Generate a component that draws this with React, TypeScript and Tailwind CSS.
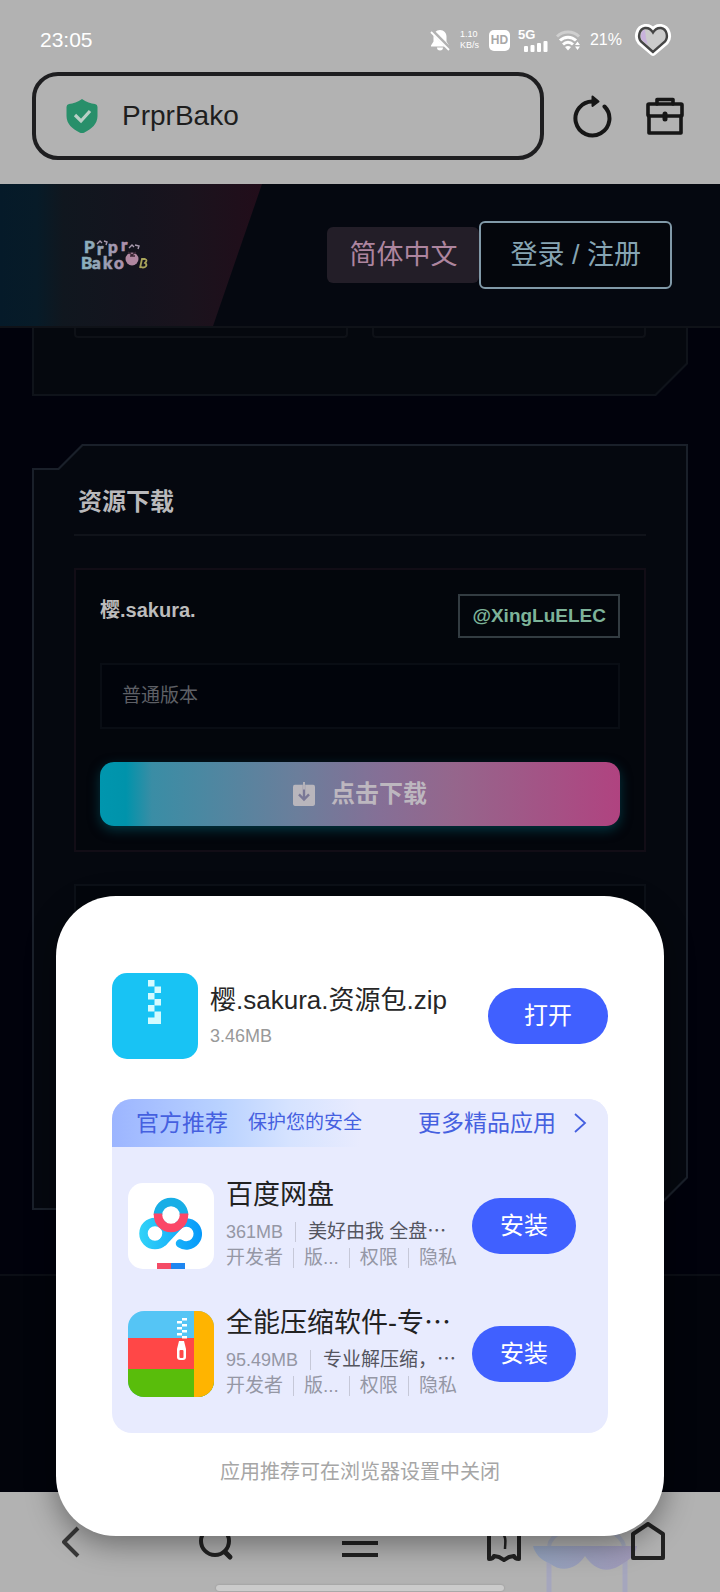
import type { ReactNode } from "react";

function BellOff() {
  return (
    <svg width="20" height="22" viewBox="0 0 20 22" aria-hidden="true">
      <path d="M10 1c4 0 6.500 3 6.500 6.500v5L19 16.500v1H1v-1l2.500-4v-5C3.500 4 6 1 10 1Z" fill="#fff" />
      <path d="M7 18.500h6a3 3 0 0 1-6 0Z" fill="#fff" />
      <path d="M1.500 1.500l18 18" stroke="#b2b2b2" strokeWidth="4" />
      <path d="M1 3l18 18" stroke="#fff" strokeWidth="1.800" />
    </svg>
  );
}

function Signal() {
  return (
    <svg width="24" height="11" viewBox="0 0 24 11" aria-hidden="true" fill="#fff">
      <rect x="0" y="5" width="4" height="6" rx="1" />
      <rect x="6.500" y="4" width="4" height="7" rx="1" />
      <rect x="13" y="2" width="4" height="9" rx="1" />
      <rect x="19.500" y="0" width="4" height="11" rx="1" />
    </svg>
  );
}

function Wifi() {
  return (
    <svg width="26" height="21" viewBox="0 0 26 21" aria-hidden="true" fill="none">
      <path d="M1 6.500C7 .5 17 .5 23 6.500" stroke="#cfcfcf" strokeWidth="3" />
      <path d="M4 10.500c4.500-4.500 11.500-4.500 16 0" stroke="#fff" strokeWidth="3" />
      <path d="M7 14.500c3-3 7-3 10 0" stroke="#fff" strokeWidth="2.800" />
      <path d="M9 17c2-1.400 4-1.400 6 0L12 20.500Z" fill="#fff" />
      <path d="M19 15l2.500-3.500L24 15ZM19 16.500l2.500 3.500 2.500-3.500Z" fill="#fff" />
    </svg>
  );
}

function Heart() {
  return (
    <svg width="38" height="34" viewBox="0 0 38 34" aria-hidden="true">
      <path d="M19 30L6 19C2 14 4 5 11 4c4-.5 6.500 1.500 8 4 1.500-2.500 4-4.500 8-4 7 1 9 10 5 15Z" fill="#cbcbcb" stroke="#fff" strokeWidth="6" strokeLinejoin="round" />
      <path d="M19 29L7 18.500C3.500 14 5 6 11 5c4-.4 6.500 2 8 4.500C20.500 7 23 4.600 27 5c6 1 7.500 9 4 13.500Z" fill="#cbcbcb" stroke="#454545" strokeWidth="2.400" />
      <path d="M8 17c-2-3-1-9 2.500-10.500C12 9 11 14 14 22Z" fill="#c9b3dc" />
    </svg>
  );
}

function Shield() {
  return (
    <svg width="32" height="36" viewBox="0 0 32 36" className="shrink-0" aria-hidden="true">
      <path d="M16 1c4 3 9 4.500 13 5q2.500.3 2.500 3v9c0 8-6 13-13 16.500q-2.500 1-5 0C6.500 31 .5 26 .5 18V9q0-2.700 2.500-3c4-.5 9-2 13-5Z" fill="#288f6a" />
      <path d="M9 17l6 6 9-10" fill="none" stroke="#b9cfc6" strokeWidth="3.200" />
    </svg>
  );
}

function Reload() {
  return (
    <svg width="40" height="44" viewBox="0 0 40 44" aria-hidden="true">
      <path d="M32.500 12.500A17 17 0 1 1 21 7.500" fill="none" stroke="#161616" strokeWidth="4" strokeLinecap="round" />
      <path d="M20.500 2.500l6 5-6 4.500Z" fill="#161616" stroke="#161616" strokeWidth="2" strokeLinejoin="round" />
    </svg>
  );
}

function Briefcase() {
  return (
    <svg width="38" height="40" viewBox="0 0 38 40" aria-hidden="true" fill="none" stroke="#161616" strokeWidth="3.600" strokeLinejoin="round" strokeLinecap="round">
      <path d="M11 8V3.500h16V8" />
      <rect x="2" y="8" width="34" height="12" rx="1" />
      <path d="M3 20v17h32V20" />
      <path d="M19 18v5" strokeWidth="5" />
    </svg>
  );
}

function Logo() {
  return (
    <svg width="70" height="34" viewBox="0 0 70 34" role="img" aria-label="PrprBako" className="overflow-visible">
      <defs>
        <linearGradient id="logo" gradientUnits="userSpaceOnUse" x1="0" y1="0" x2="46" y2="0">
          <stop offset="0" stopColor="#84b3be" />
          <stop offset="1" stopColor="#b08fac" />
        </linearGradient>
      </defs>
      <g fontFamily="Lato, 'Liberation Sans', sans-serif" fontWeight="900" fill="url(#logo)" stroke="url(#logo)" strokeWidth=".6">
        <text x="4 17 28 41" y="15 17 15 13" fontSize="17">Prpr</text>
        <text x="1 12 23 34" y="31" fontSize="17">Bako</text>
      </g>
      <path d="M17 6l3-3 2 2M24 3l3 1-1 3M49 10l3-3 2 2M55 7l4 1-1 3" fill="none" stroke="#a89aae" strokeWidth="1.400" />
      <circle cx="52" cy="21" r="6.500" fill="#b087a0" />
      <path d="M48 14l4 3 4-3M50 18h5" fill="none" stroke="#3b2735" strokeWidth="1.300" />
      <path d="M60 30l2-9h3q3 1 0 4 3 2 0 4-2 1-4 0" fill="none" stroke="#a8a45a" strokeWidth="1.800" />
    </svg>
  );
}

function DownloadBox() {
  return (
    <svg width="22" height="24" viewBox="0 0 24 26" aria-hidden="true">
      <rect x="0" y="3" width="24" height="23" rx="2" fill="#b9b6bc" />
      <path d="M12 3v16M6.500 13.500L12 19l5.500-5.500" fill="none" stroke="#7a7896" strokeWidth="2.600" />
      <path d="M12 0v8" stroke="#b9b6bc" strokeWidth="2" />
    </svg>
  );
}

function ZipIcon() {
  return (
    <svg className="size-[86px] shrink-0" viewBox="0 0 86 86" aria-hidden="true">
      <rect width="86" height="86" rx="15" fill="#18c3f4" />
      <g fill="#d3fbff">
        <rect x="36" y="7" width="6.500" height="6.500" />
        <rect x="42.500" y="13.500" width="6.500" height="6.500" />
        <rect x="36" y="20" width="6.500" height="6.500" />
        <rect x="42.500" y="26" width="6.500" height="6.500" />
        <rect x="36" y="32" width="6.500" height="6.500" />
        <path d="M42.500 38.500H49V51H36v-6.500h6.500Z" />
      </g>
    </svg>
  );
}

function CloudDiskIcon() {
  return (
    <svg className="size-[86px] shrink-0" viewBox="0 0 86 86" aria-hidden="true">
      <defs>
        <linearGradient id="disk-blue" gradientUnits="userSpaceOnUse" x1="11" y1="50" x2="75" y2="50">
          <stop offset="0" stopColor="#31d3f8" />
          <stop offset="1" stopColor="#0698fa" />
        </linearGradient>
      </defs>
      <rect width="86" height="86" rx="15" fill="#fff" />
      <g fill="none" strokeWidth="8.500">
        <circle cx="27" cy="50.500" r="11.500" stroke="url(#disk-blue)" />
        <path d="M52 60.500A11.500 11.500 0 1 0 51 42L35 59" stroke="url(#disk-blue)" strokeLinecap="round" />
        <path d="M30 32a13 13 0 0 1 26 0" stroke="#18aee6" />
        <path d="M30 30.500v1.500a13 13 0 0 0 26 0v-1.500" stroke="#fb4768" />
      </g>
      <path d="M29 80h14v6H29Z" fill="#f44b66" />
      <path d="M43 80h14v6H43Z" fill="#1e86f0" />
    </svg>
  );
}

function ArchiverIcon() {
  return (
    <svg className="size-[86px] shrink-0 rounded-2xl" viewBox="0 0 86 86" aria-hidden="true">
      <rect width="86" height="86" fill="#55c5f5" />
      <rect y="27" width="86" height="31" fill="#ff4747" />
      <rect y="58" width="86" height="28" fill="#59bd0b" />
      <rect x="66" width="20" height="86" fill="#ffb400" />
      <g fill="#fff">
        <path d="M54 7h5v2.500h-5ZM49 10h5v2.500h-5ZM54 13h5v2.500h-5ZM49 16h5v2.500h-5ZM54 19h5v2.500h-5ZM49 22h5v2.500h-5ZM54 25h5v2.500h-5Z" />
        <path d="M51 30h5l2 8v8q0 3-3 3h-3q-3 0-3-3v-8Z" />
      </g>
      <rect x="51.500" y="39" width="4" height="8" rx="1" fill="#ff4747" />
    </svg>
  );
}

function NavButton({ label, children }: { label: string; children: ReactNode }) {
  return (
    <button type="button" aria-label={label} className="flex h-10 items-center justify-center">
      {children}
    </button>
  );
}

const navStroke = { fill: "none", stroke: "#222", strokeWidth: 4, strokeLinejoin: "round" as const };

function BottomNav() {
  return (
    <nav className="relative flex h-[100px] flex-col items-center justify-between bg-[#b2b2b2] pt-[30px]">
      <svg className="absolute right-[82px] bottom-0" width="106" height="64" viewBox="0 0 106 64" aria-hidden="true">
        <defs>
          <linearGradient id="bag" x1="0" y1="0" x2="1" y2="0">
            <stop offset="0" stopColor="#94a3be" />
            <stop offset="1" stopColor="#a099b8" />
          </linearGradient>
        </defs>
        <path d="M17 32v34M93 32v34" stroke="#a5a6bd" strokeWidth="5" />
        <path d="M17 18C22-8 86-8 92 18" fill="none" stroke="#a0a6b8" strokeWidth="4" />
        <path d="M1 18h104c-2 10-8 14-18 20-14 8-26 2-34-10-8 12-22 18-36 7C9 32 3 26 1 18Z" fill="url(#bag)" />
      </svg>
      <div className="relative grid w-full grid-cols-5">
        <NavButton label="后退">
          <svg width="20" height="34" viewBox="0 0 20 34" aria-hidden="true">
            <path d="M16 3L2 17l14 14" {...navStroke} stroke="#383838" />
          </svg>
        </NavButton>
        <NavButton label="搜索">
          <svg width="36" height="38" viewBox="0 0 36 38" aria-hidden="true">
            <circle cx="17" cy="18" r="14" {...navStroke} />
            <path d="M27 29l5 5" {...navStroke} strokeWidth={5} strokeLinecap="round" />
          </svg>
        </NavButton>
        <NavButton label="菜单">
          <svg width="36" height="38" viewBox="0 0 36 38" aria-hidden="true">
            <path d="M0 7h36M0 20h36M0 32h36" {...navStroke} />
          </svg>
        </NavButton>
        <NavButton label="标签页">
          <svg width="36" height="40" viewBox="0 0 36 40" aria-hidden="true">
            <path d="M3 4h30v33q-4 0-5-3l-5 1-5 3-5-3-5-1q-1 3-5 3Z" {...navStroke} />
            <path d="M17 12c4 4 2 9 2 15" {...navStroke} strokeWidth={2.5} />
          </svg>
        </NavButton>
        <NavButton label="主页">
          <svg width="36" height="40" viewBox="0 0 36 40" aria-hidden="true">
            <path d="M18 2L3 12v24h30V12Z" {...navStroke} />
          </svg>
        </NavButton>
      </div>
      <div className="mb-px h-[6px] w-2/5 rounded-full bg-[#cbcbcb] shadow-[0_0_2px_#8d8d8d]" />
    </nav>
  );
}

function BrowserBar() {
  return (
    <div className="bg-[#b2b2b2] pb-6">
      <div className="flex h-[72px] items-center justify-between pt-2 pr-12 pl-10 text-white">
        <time className="text-[21px]">23:05</time>
        <div className="flex items-center gap-2">
          <BellOff />
          <div className="mx-[2px] flex flex-col text-[9px] leading-[11px]">
            <span>1.10</span>
            <span>KB/s</span>
          </div>
          <span className="flex size-[21px] items-center justify-center rounded-[5px] bg-white text-[12px] font-bold text-[#a8a8a8]">HD</span>
          <div className="flex flex-col">
            <span className="text-[13px] leading-[12px] font-bold">5G</span>
            <span className="pl-[6px]"><Signal /></span>
          </div>
          <Wifi />
          <span className="text-[16px]">21%</span>
          <span className="ml-1"><Heart /></span>
        </div>
      </div>
      <div className="flex items-center pr-9 pl-8">
        <label className="flex h-[88px] flex-1 items-center gap-6 rounded-[26px] border-4 border-[#1e1e20] px-[30px]">
          <Shield />
          <input aria-label="网址" defaultValue="PrprBako" className="w-full min-w-0 bg-transparent text-[28px] text-[#1e1e1e] outline-none" />
        </label>
        <button type="button" aria-label="刷新" className="ml-7"><Reload /></button>
        <button type="button" aria-label="工具箱" className="ml-[34px]"><Briefcase /></button>
      </div>
    </div>
  );
}

function SiteHeader() {
  return (
    <header className="flex h-36 items-center justify-between border-b-2 border-[#0f1218] bg-[#050810] pr-12">
      <div className="flex h-full w-[262px] items-center bg-[linear-gradient(90deg,#051a29_0%,#071b28_14%,#10171f_24%,#14141e_50%,#1a131d_72%,#220d1a_100%)] pl-20 [clip-path:polygon(0_0,100%_0,213px_100%,0_100%)]">
        <Logo />
      </div>
      <div className="flex items-center text-[27px]">
        <button type="button" className="h-14 rounded-md bg-[#231e28] px-[22px] text-[#ad859f]">简体中文</button>
        <button type="button" className="h-[68px] rounded-md border-2 border-[#8199a8] bg-[#04060c] px-[29px] text-[#86a4b3]">登录 / 注册</button>
      </div>
    </header>
  );
}

function DownloadCard() {
  return (
    <article className="border-2 border-[#120d16] bg-[#03060c] p-6">
      <div className="flex items-start justify-between">
        <h3 className="text-[20px] leading-8 font-bold text-[#bcbcbc]">樱.sakura.</h3>
        <span className="flex h-11 items-center border-2 border-[#333c42] px-3 text-[19px] font-bold text-[#7db399]">@XingLuELEC</span>
      </div>
      <p className="mt-[25px] flex h-[66px] items-center border-2 border-[#090d14] bg-[#01040b] px-5 text-[19px] text-[#5e6066]">普通版本</p>
      <button
        type="button"
        className="mt-[33px] flex h-16 w-full items-center justify-center gap-4 rounded-[14px] bg-[linear-gradient(90deg,#0096ae_0%,#0093ab_5%,#3a8da5_10%,#6b7e9b_38%,#856f96_54%,#95668c_68%,#b04380_100%)] text-[24px] font-bold text-[#bdb7bf] shadow-[0_4px_12px_rgba(0,100,115,0.5)]"
      >
        <DownloadBox />
        点击下载
      </button>
    </article>
  );
}

function SitePage() {
  return (
    <main className="flex-1 bg-[#01020c]">
      <div className="mx-8 bg-[#0f131a] px-[2px] pb-[2px] [clip-path:polygon(0_0,100%_0,100%_calc(100%-32px),calc(100%-32px)_100%,0_100%)]">
        <div className="flex gap-6 bg-[#05080e] px-10 pb-14 [clip-path:polygon(0_0,100%_0,100%_calc(100%-31px),calc(100%-31px)_100%,0_100%)]">
          <div className="h-[10px] flex-1 rounded-b border-2 border-t-0 border-[#0e1117]" />
          <div className="h-[10px] flex-1 rounded-b border-2 border-t-0 border-[#0e1117]" />
        </div>
      </div>
      <section className="mx-8 mt-12 bg-[#1a202a] p-[2px] [clip-path:polygon(0_24px,26px_24px,50px_0,100%_0,100%_calc(100%-32px),calc(100%-32px)_100%,0_100%)]">
        <div className="bg-[#05080f] px-10 py-10 [clip-path:polygon(0_24px,25px_24px,49px_0,100%_0,100%_calc(100%-31px),calc(100%-31px)_100%,0_100%)]">
          <h2 className="border-b-2 border-[#10131a] pb-4 pl-1 text-[24px] leading-8 font-bold text-[#b9b9bb]">资源下载</h2>
          <div className="mt-8 flex flex-col gap-8">
            <DownloadCard />
            <div className="h-[284px] border-2 border-[#0c1017] bg-[#03060c]" />
          </div>
        </div>
      </section>
      <div className="mt-16 h-[216px] border-t-2 border-[#0b0e15] bg-[#02040b]" />
    </main>
  );
}

interface AppItem {
  name: string;
  cut?: boolean;
  size: string;
  note: string;
  icon: ReactNode;
}

const apps: AppItem[] = [
  { name: "百度网盘", size: "361MB", note: "美好由我 全盘", icon: <CloudDiskIcon /> },
  { name: "全能压缩软件-专", cut: true, size: "95.49MB", note: "专业解压缩，", icon: <ArchiverIcon /> },
];

function Bar() {
  return <span className="h-5 w-px shrink-0 bg-[#c6c8d8]" />;
}

function AppRow({ app }: { app: AppItem }) {
  return (
    <li className="flex h-[86px] items-center">
      {app.icon}
      <div className="w-[258px] pl-3 whitespace-nowrap">
        <h3 className="text-[27px] leading-7 text-[#222]">
          {app.name}
          {app.cut && <span>⋯</span>}
        </h3>
        <div className="mt-[10px] flex h-[26px] items-center gap-3 text-[18px] text-[#9597a5]">
          <span>{app.size}</span>
          <Bar />
          <span className="text-[19px] text-[#54555f]">{app.note}⋯</span>
        </div>
        <div className="flex h-[26px] items-center gap-[10px] text-[19px] text-[#9597a5]">
          <a href="#developer">开发者</a>
          <Bar />
          <a href="#version">版...</a>
          <Bar />
          <a href="#permissions">权限</a>
          <Bar />
          <a href="#privacy">隐私</a>
        </div>
      </div>
      <button type="button" className="h-14 w-[104px] shrink-0 rounded-full bg-[#4060ff] text-[24px] text-white">安装</button>
    </li>
  );
}

function DownloadDialog() {
  return (
    <div role="dialog" aria-label="下载完成" className="absolute inset-x-14 bottom-14 rounded-[60px] bg-white px-14 pt-[77px] pb-12 shadow-[0_8px_30px_rgba(0,0,0,0.4)]">
      <div className="flex h-[86px] items-center">
        <ZipIcon />
        <div className="flex-1 pl-3">
          <p className="text-[26px] leading-8 whitespace-nowrap text-[#262626]">樱.sakura.资源包.zip</p>
          <p className="mt-2 text-[18px] leading-6 text-[#999]">3.46MB</p>
        </div>
        <button type="button" className="h-14 w-[120px] shrink-0 rounded-full bg-[#4060ff] text-[24px] text-white">打开</button>
      </div>
      <section className="mt-10 overflow-hidden rounded-[20px] bg-[#e8ebfe] pb-9">
        <div className="flex h-12 items-center bg-[linear-gradient(90deg,#9cb5ff_0%,#b9d2ff_22%,#d6e3ff_36%,#e8ebfe_50%)] pr-5 pl-6 text-[#4560e0]">
          <h2 className="text-[23px]">官方推荐</h2>
          <p className="ml-5 text-[19px]">保护您的安全</p>
          <a href="#more" className="ml-auto flex items-center gap-4 text-[23px]">
            更多精品应用
            <svg width="16" height="22" viewBox="0 0 16 22" aria-hidden="true">
              <path d="M3 2l10 9-10 9" fill="none" stroke="#4560e0" strokeWidth="1.800" />
            </svg>
          </a>
        </div>
        <ul className="mt-9 flex flex-col gap-[42px] pl-4">
          {apps.map((app) => (
            <AppRow key={app.name} app={app} />
          ))}
        </ul>
      </section>
      <p className="mt-[23px] text-center text-[20px] leading-8 text-[#a6a6a6]">应用推荐可在浏览器设置中关闭</p>
    </div>
  );
}

export default function App() {
  return (
    <div lang="zh-CN" className="relative flex min-h-screen flex-col overflow-hidden bg-[#01020c] font-['Liberation_Sans','Noto_Sans_CJK_SC',sans-serif]">
      <BrowserBar />
      <SiteHeader />
      <SitePage />
      <BottomNav />
      <DownloadDialog />
    </div>
  );
}
